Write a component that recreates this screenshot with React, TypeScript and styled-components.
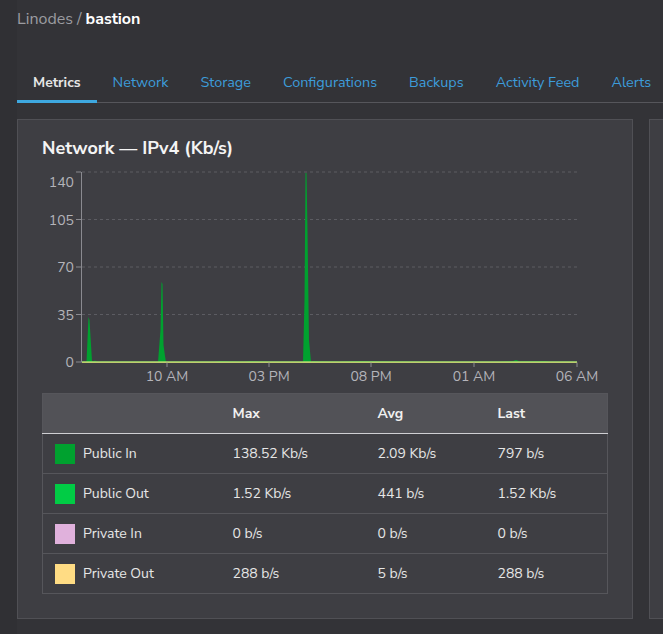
import React from "react";
import styled, { createGlobalStyle } from "styled-components";

const Global = createGlobalStyle`
  html, body { margin: 0; padding: 0; background: #333337; overflow: hidden; }
  body { font-family: "Nunito Sans", Lato, "Open Sans", sans-serif; color: #e6e6e6; }
`;

const Page = styled.div`
  width: 663px;
  height: 634px;
  background: linear-gradient(to right, #303034 0, #303034 17px, #333337 17px);
  padding: 0 0 0 17px;
  box-sizing: border-box;
  overflow: hidden;
`;

const Crumbs = styled.div`
  height: 36px;
  display: flex;
  align-items: center;
  font-size: 16px;
  color: #9c9ca1;
  gap: 4px;
  padding-top: 1px;
  box-sizing: border-box;
`;

const Current = styled.span`
  color: #ffffff;
  font-weight: 700;
`;

const Tabs = styled.div`
  margin-top: 28px;
  display: flex;
  border-bottom: 1px solid #56565b;
  height: 39px;
  box-sizing: border-box;
  width: 700px;
`;

const Tab = styled.div<{ $active?: boolean }>`
  padding: 0 16px;
  height: 39px;
  flex-shrink: 0;
  display: flex;
  align-items: center;
  font-size: ${(p) => (p.$active ? "14px" : "14.4px")};
  font-weight: ${(p) => (p.$active ? 700 : 400)};
  color: ${(p) => (p.$active ? "#e6e6e6" : "#3d9cda")};
  box-sizing: border-box;
  border-bottom: 3px solid ${(p) => (p.$active ? "#3ea8e0" : "transparent")};
  margin-bottom: -1px;
`;

const Cards = styled.div`
  margin-top: 16px;
  display: flex;
  gap: 16px;
`;

const Card = styled.div`
  width: 616px;
  height: 500px;
  flex-shrink: 0;
  background: #3e3e43;
  border: 1px solid #505055;
  box-sizing: border-box;
  padding: 17px 24px 0;
`;

const GhostCard = styled(Card)`
  width: 100px;
`;

const Title = styled.h2`
  margin: 0;
  font-size: 18px;
  font-weight: 700;
  color: #f4f4f4;
  line-height: 22px;
`;

const ChartSvg = styled.svg`
  display: block;
  margin-top: 1px;
`;

const Table = styled.table`
  margin-top: 7px;
  width: 566px;
  border-collapse: collapse;
  border: 1px solid #56565b;
  font-size: 14px;
`;

const HeadCell = styled.th`
  background: #525257;
  height: 40px;
  text-align: left;
  font-weight: 700;
  color: #f0f0f0;
  padding: 0;
  border-bottom: 1.5px solid #cfcfd3;
  box-sizing: border-box;
`;

const Cell = styled.td`
  height: 40px;
  padding: 0;
  border-bottom: 1px solid #56565b;
  color: #e6e6e6;
  box-sizing: border-box;
`;

const LegendWrap = styled.div`
  display: flex;
  align-items: center;
  gap: 8px;
  padding-left: 12px;
`;

const Swatch = styled.span<{ $c: string }>`
  width: 20px;
  height: 20px;
  background: ${(p) => p.$c};
  display: inline-block;
`;

const rows = [
  { name: "Public In", c: "#00a12f", max: "138.52 Kb/s", avg: "2.09 Kb/s", last: "797 b/s" },
  { name: "Public Out", c: "#01cc45", max: "1.52 Kb/s", avg: "441 b/s", last: "1.52 Kb/s" },
  { name: "Private In", c: "#e0b1dc", max: "0 b/s", avg: "0 b/s", last: "0 b/s" },
  { name: "Private Out", c: "#ffdc84", max: "288 b/s", avg: "5 b/s", last: "288 b/s" },
];

const yTicks = [
  { v: "140", y: 172, ly: 182 },
  { v: "105", y: 219.5, ly: 219.5 },
  { v: "70", y: 267, ly: 267 },
  { v: "35", y: 314.5, ly: 314.5 },
  { v: "0", y: 362, ly: 362 },
];

const xTicks = [
  { l: "10 AM", x: 167 },
  { l: "03 PM", x: 269 },
  { l: "08 PM", x: 371 },
  { l: "01 AM", x: 474 },
  { l: "06 AM", x: 577 },
];

function Chart() {
  const inPath =
    "M82,362 L86.5,362 L88.5,317 L89.5,320 L92,361 L94,361 L95,360.5 L97,362 " +
    "L158,362 L160.5,330 L161.5,282 L162.5,284 L163.5,345 L165,356 L166,362 " +
    "L215,362 L220,361 L230,361.5 L245,362 L250,361 L258,361.5 L268,362 " +
    "L303,362 L304.5,300 L305.5,173 L306.5,173 L307.5,230 L309,340 L311,362 L313,361 L318,361.5 " +
    "L340,362 L360,361 L380,361.5 L420,362 L500,362 L513,361 L516,360 L520,361.5 L545,361 L550,362 L577,362 L577,363 L82,363 Z";
  const font = "'Nunito Sans', Lato, sans-serif";
  return (
    <ChartSvg width={566} height={226} viewBox="42 160 566 226">
      {yTicks.slice(0, 4).map((t) => (
        <line key={t.v} x1={82} x2={577} y1={t.y} y2={t.y} stroke="#5c5c62" strokeWidth={1} strokeDasharray="3 3" />
      ))}
      <line x1={81.5} x2={81.5} y1={172} y2={362.5} stroke="#8a8a90" strokeWidth={1} />
      {yTicks.map((t) => (
        <g key={t.v}>
          <line x1={76} x2={81} y1={t.y} y2={t.y} stroke="#8a8a90" strokeWidth={1} />
          <text x={74} y={t.ly + 5} textAnchor="end" fontSize={14} fill="#b4b4ba" fontFamily={font}>
            {t.v}
          </text>
        </g>
      ))}
      <path d={inPath} fill="#00a12f" />
      <line x1={82} x2={577} y1={362} y2={362} stroke="#ffdc84" strokeWidth={1.5} />
      <line x1={82} x2={577} y1={361.6} y2={361.6} stroke="#01cc45" strokeWidth={0.6} opacity={0.6} />
      {xTicks.map((t) => (
        <g key={t.l}>
          <line x1={t.x} x2={t.x} y1={362.5} y2={367} stroke="#8a8a90" strokeWidth={1} />
          <text x={t.x} y={381} textAnchor="middle" fontSize={14} fill="#b4b4ba" fontFamily={font}>
            {t.l}
          </text>
        </g>
      ))}
    </ChartSvg>
  );
}

export default function App() {
  return (
    <>
      <Global />
      <Page>
        <Crumbs>
          <span>Linodes /</span>
          <Current>bastion</Current>
        </Crumbs>
        <Tabs>
          <Tab $active>Metrics</Tab>
          <Tab>Network</Tab>
          <Tab>Storage</Tab>
          <Tab>Configurations</Tab>
          <Tab>Backups</Tab>
          <Tab>Activity Feed</Tab>
          <Tab>Alerts</Tab>
        </Tabs>
        <Cards>
          <Card>
            <Title>Network — IPv4 (Kb/s)</Title>
            <Chart />
            <Table>
              <colgroup>
                <col style={{ width: 190 }} />
                <col style={{ width: 145 }} />
                <col style={{ width: 120 }} />
                <col />
              </colgroup>
              <thead>
                <tr>
                  <HeadCell />
                  <HeadCell>Max</HeadCell>
                  <HeadCell>Avg</HeadCell>
                  <HeadCell>Last</HeadCell>
                </tr>
              </thead>
              <tbody>
                {rows.map((r) => (
                  <tr key={r.name}>
                    <Cell>
                      <LegendWrap>
                        <Swatch $c={r.c} />
                        <span>{r.name}</span>
                      </LegendWrap>
                    </Cell>
                    <Cell>{r.max}</Cell>
                    <Cell>{r.avg}</Cell>
                    <Cell>{r.last}</Cell>
                  </tr>
                ))}
              </tbody>
            </Table>
          </Card>
          <GhostCard />
        </Cards>
      </Page>
    </>
  );
}
